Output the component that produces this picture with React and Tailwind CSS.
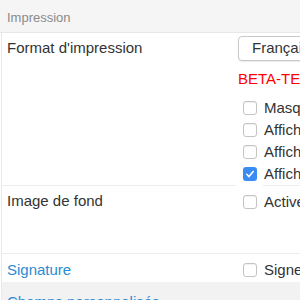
function Checkbox({ checked }) {
  return checked ? (
    <span className="flex h-[14px] w-[14px] shrink-0 items-center justify-center rounded-[3px] bg-[#3b8cf2]">
      <svg viewBox="0 0 14 14" className="h-[14px] w-[14px]" fill="none" stroke="white" strokeWidth="1.6" strokeLinecap="round" strokeLinejoin="round">
        <path d="M3.8 7.3l2.2 2.3 4.2-5" />
      </svg>
    </span>
  ) : (
    <span className="h-[14px] w-[14px] shrink-0 rounded-[3px] border border-[#c4c4c4] bg-white shadow-[inset_0_1px_1px_rgba(0,0,0,0.06)]" />
  );
}

function Option({ label, checked }) {
  return (
    <div className="flex h-[22px] items-center gap-[7px] pl-[5px]">
      <Checkbox checked={checked} />
      <span className="whitespace-nowrap text-[15px] text-[#333]">{label}</span>
    </div>
  );
}

export default function App() {
  return (
    <div className="h-[300px] w-[300px] overflow-hidden bg-white font-['Liberation_Sans',Arial,sans-serif]">
      <div className="flex h-[33px] items-center border-b border-[#e8e8e8] bg-[#f5f5f5] pl-[7px] pt-[3px] text-[13px] text-[#8a8a8a]">
        Impression
      </div>

      <div className="ml-px border-l border-[#e8e8e8]">
        <div className="flex">
          <div className="w-[236px] shrink-0 pl-[5px] pt-[5px] text-[15px] leading-[20px] text-[#333]">
            Format d'impression
          </div>
          <div className="min-w-0 flex-1 pt-[3px]">
            <div className="flex h-[25px] w-[120px] items-center rounded-[4px] border border-[#c8c8c8] bg-white pl-[13px] text-[15px] text-[#333] shadow-[0_1px_1px_rgba(0,0,0,0.08)]">
              Français
            </div>
            <div className="mt-[8px] whitespace-nowrap text-[15px] leading-[20px] text-[#ff0000]">BETA-TESTEURS</div>
            <div className="mt-[8px]">
              <Option label="Masquer" />
              <Option label="Afficher" />
              <Option label="Afficher" />
              <Option label="Afficher" checked />
            </div>
          </div>
        </div>

        <div className="flex">
          <div className="w-[234px] border-t border-[#ececec]" />
          <div className="ml-[27px] flex-1 border-t border-[#ececec]" />
        </div>

        <div className="flex h-[67px]">
          <div className="w-[236px] shrink-0 pl-[5px] pt-[5px] text-[15px] leading-[20px] text-[#333]">
            Image de fond
          </div>
          <div className="min-w-0 flex-1 pt-[5px]">
            <Option label="Activer" />
          </div>
        </div>

        <div className="flex h-[29px] border-t border-[#ececec]">
          <div className="w-[236px] shrink-0 pl-[5px] pt-[6px] text-[15px] leading-[20px] text-[#2a8bd2]">
            Signature
          </div>
          <div className="min-w-0 flex-1 pt-[5px]">
            <Option label="Signer" />
          </div>
        </div>

        <div className="h-[40px] bg-[#f2f2f2] pl-[5px] pt-[10px] text-[15px] leading-[20px] text-[#2a8bd2]">
          Champs personnalisés
        </div>
      </div>
    </div>
  );
}
